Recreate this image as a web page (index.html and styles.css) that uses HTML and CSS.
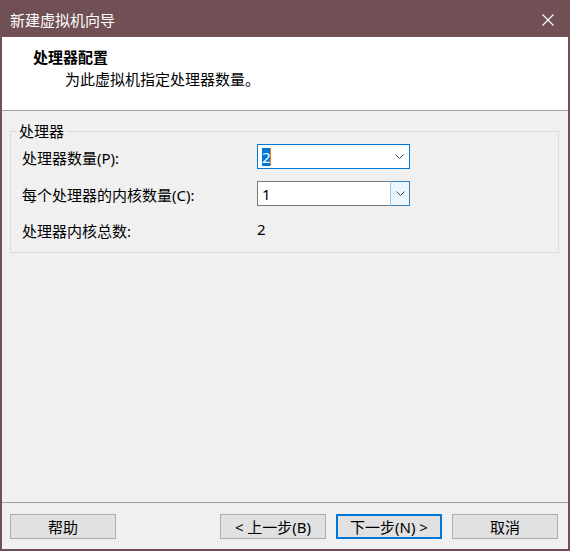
FILE: index.html
```html
<!DOCTYPE html>
<html lang="zh-CN">

<head>
    <meta charset="UTF-8">
    <meta name="viewport" content="width=device-width, initial-scale=1.0">
    <title>新建虚拟机向导</title>
    <link rel="stylesheet" href="styles.css">
</head>

<body>
    <div class="window">
        <div class="titlebar">
            <span class="title">新建虚拟机向导</span>
            <svg class="close" width="12" height="12" viewBox="0 0 12 12">
                <path d="M0.5 0.5 L11.5 11.5 M11.5 0.5 L0.5 11.5" stroke="#fff" stroke-width="1.1" fill="none" />
            </svg>
        </div>

        <div class="header">
            <div class="header-title">处理器配置</div>
            <div class="header-sub">为此虚拟机指定处理器数量。</div>
        </div>

        <div class="content">
            <fieldset class="group">
                <legend>处理器</legend>
                <div class="rows">
                    <label class="row-label">处理器数量(P):</label>
                    <div class="combo combo-focus">
                        <span class="combo-value"><span class="selected">2</span><span class="caret"></span></span>
                        <span class="combo-arrow">
                            <svg width="9" height="5" viewBox="0 0 9 5">
                                <polyline points="0.5,0.5 4.5,4.5 8.5,0.5" stroke="#444" stroke-width="1" fill="none" />
                            </svg>
                        </span>
                    </div>

                    <label class="row-label">每个处理器的内核数量(C):</label>
                    <div class="combo">
                        <span class="combo-value">1</span>
                        <span class="combo-arrow combo-arrow-hover">
                            <svg width="9" height="5" viewBox="0 0 9 5">
                                <polyline points="0.5,0.5 4.5,4.5 8.5,0.5" stroke="#444" stroke-width="1" fill="none" />
                            </svg>
                        </span>
                    </div>

                    <span class="row-label total">处理器内核总数:</span>
                    <span class="total-value">2</span>
                </div>
            </fieldset>
        </div>

        <div class="footer">
            <button class="btn">帮助</button>
            <div class="nav">
                <button class="btn">&lt; 上一步(B)</button>
                <button class="btn btn-default">下一步(N) &gt;</button>
                <button class="btn">取消</button>
            </div>
        </div>
    </div>
</body>

</html>
```

FILE: styles.css
```css
body {
    margin: 0;
    font-family: "Noto Sans", "Noto Sans CJK SC", sans-serif;
    font-size: 15px;
    line-height: 20px;
    color: #000;
    overflow: hidden;
}

.window {
    width: 570px;
    height: 551px;
    box-sizing: border-box;
    border: 2px solid #705054;
    border-top: none;
    background: #f0f0f0;
    display: flex;
    flex-direction: column;
}

.titlebar {
    height: 37px;
    flex: none;
    background: #705054;
    color: #fff;
    display: flex;
    align-items: center;
    justify-content: space-between;
    padding: 2px 14px 0 8px;
    box-sizing: border-box;
    margin: 0 -2px;
    padding-left: 10px;
    padding-right: 16px;
}

.title {
    font-family: "Noto Sans CJK SC", sans-serif;
}

.close {
    display: block;
}

.header {
    height: 74px;
    flex: none;
    box-sizing: border-box;
    background: #fff;
    border-bottom: 1px solid #a0a0a0;
    padding: 10px 0 0 31px;
}

.header-title {
    font-family: "Noto Sans CJK SC", sans-serif;
    font-weight: 700;
}

.header-sub {
    margin-top: 2px;
    padding-left: 32px;
    font-family: "Noto Sans CJK SC", sans-serif;
}

.content {
    flex: 1;
    padding: 10px 9px 0 8px;
}

.group {
    margin: 0;
    padding: 0 0 14px 11px;
    border: 1px solid #dcdcdc;
}

.group legend {
    margin-left: -5px;
    padding: 0 2px;
}

.rows {
    margin-top: 3px;
    display: grid;
    grid-template-columns: 235px 153px;
    grid-template-rows: 25px 25px 20px;
    row-gap: 12px;
    align-items: center;
}

.rows .total,
.rows .total-value {
    margin-top: 2px;
}

.row-label {
    padding-top: 3px;
}

.combo {
    height: 25px;
    box-sizing: border-box;
    border: 1px solid #7a7a7a;
    background: #fff;
    display: flex;
    align-items: center;
}

.combo-focus {
    border-color: #0078d7;
}

.combo-value {
    flex: 1;
    padding-left: 4px;
    display: flex;
    align-items: center;
}

.selected {
    background: #0078d7;
    color: #fff;
    line-height: 18px;
    padding: 0 0 0 0;
    width: 8px;
}

.caret {
    width: 1px;
    height: 18px;
    background: #e8822a;
}

.combo-arrow {
    width: 20px;
    align-self: stretch;
    display: flex;
    align-items: center;
    justify-content: center;
    box-sizing: border-box;
}

.combo-arrow svg {
    display: block;
}

.combo-arrow-hover {
    margin: -1px -1px -1px 0;
    border: 1px solid #3c7fb1;
    border-left-color: #99c9ef;
    background: #eef6fd;
}

.footer {
    height: 47px;
    flex: none;
    box-sizing: border-box;
    border-top: 1px solid #a0a0a0;
    padding: 11px 10px 0 8px;
    display: flex;
    justify-content: space-between;
}

.nav {
    display: flex;
    gap: 10px;
}

.btn {
    width: 106px;
    height: 25px;
    box-sizing: border-box;
    margin: 0;
    padding: 0;
    font: inherit;
    font-family: "Noto Sans", "Noto Sans CJK SC", sans-serif;
    color: #000;
    background: #e1e1e1;
    border: 1px solid #adadad;
    border-radius: 0;
}

.btn-default {
    border: 2px solid #0078d7;
}
```
